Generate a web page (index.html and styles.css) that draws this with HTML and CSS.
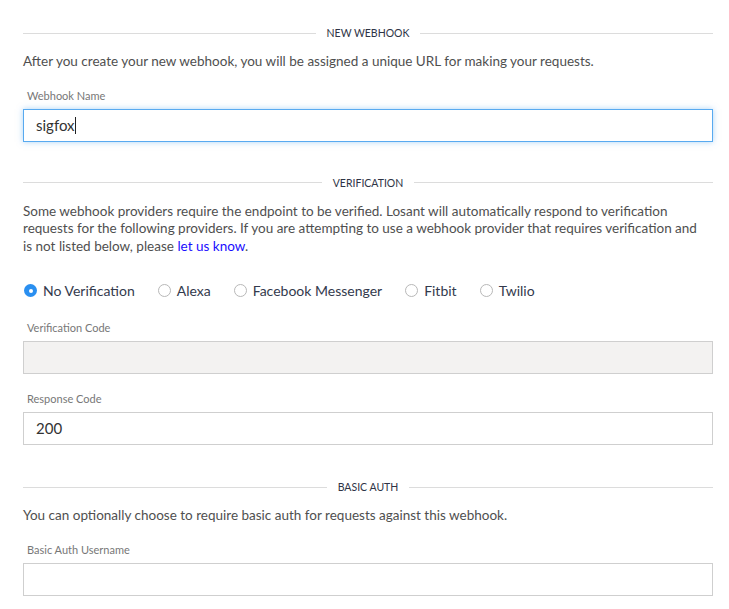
FILE: index.html
```html
<!DOCTYPE html>
<html>
<head>
<meta charset="utf-8">
<link rel="stylesheet" href="styles.css">
</head>
<body>
<div class="page">
  <div class="divider"><span>NEW WEBHOOK</span></div>
  <p class="desc">After you create your new webhook, you will be assigned a unique URL for making your requests.</p>
  <div class="field">
    <label class="label">Webhook Name</label>
    <div class="input focused">sigfox<span class="caret"></span></div>
  </div>

  <div class="divider sec"><span>VERIFICATION</span></div>
  <p class="desc">Some webhook providers require the endpoint to be verified. Losant will automatically respond to verification requests for the following providers. If you are attempting to use a webhook provider that requires verification and is not listed below, please <a href="#">let us know</a>.</p>
  <div class="radios">
    <label class="radio"><span class="dot checked"></span>No Verification</label>
    <label class="radio"><span class="dot"></span>Alexa</label>
    <label class="radio"><span class="dot"></span>Facebook Messenger</label>
    <label class="radio"><span class="dot"></span>Fitbit</label>
    <label class="radio"><span class="dot"></span>Twilio</label>
  </div>
  <div class="field">
    <label class="label">Verification Code</label>
    <div class="input disabled"></div>
  </div>
  <div class="field">
    <label class="label">Response Code</label>
    <div class="input">200</div>
  </div>

  <div class="divider sec2"><span>BASIC AUTH</span></div>
  <p class="desc">You can optionally choose to require basic auth for requests against this webhook.</p>
  <div class="field">
    <label class="label">Basic Auth Username</label>
    <div class="input"></div>
  </div>
</div>
</body>
</html>
```

FILE: styles.css
```css
html, body {
  margin: 0;
  padding: 0;
  background: #ffffff;
}
body {
  font-family: "Lato", "Fira Sans", "Open Sans", sans-serif;
  color: #4a4a4a;
}
.page {
  padding: 26px 16px 0 23px;
}
.divider {
  display: flex;
  align-items: center;
  gap: 11px;
  font-size: 10.5px;
  color: #2e3446;
  height: 14px;
  line-height: 14px;
}
.divider::before, .divider::after {
  content: "";
  flex: 1;
  border-top: 1px solid #dcdcdc;
}
.divider.sec { margin-top: 34px; }
.divider.sec2 { margin-top: 35px; }
.desc {
  margin: 13px 0 0 0;
  max-width: 680px;
  font-size: 13.5px;
  line-height: 17.5px;
  color: #4f4f4f;
}
.desc a {
  color: #1a0dff;
  text-decoration: none;
}
.field {
  margin-top: 18px;
}
.label {
  display: block;
  font-size: 11px;
  line-height: 13px;
  color: #777777;
  padding-left: 4px;
  margin-bottom: 7px;
}
.input {
  box-sizing: border-box;
  height: 33px;
  border: 1px solid #cfcfcf;
  background: #fff;
  padding: 0 12px;
  font-size: 15px;
  line-height: 31px;
  color: #333;
}
.input.focused {
  border-color: #58aaf0;
  box-shadow: 0 0 6px rgba(88, 170, 240, 0.5);
}
.input.disabled {
  background: #f3f2f1;
}
.caret {
  display: inline-block;
  width: 1px;
  height: 17px;
  background: #222;
  vertical-align: -3px;
}
.radios {
  display: flex;
  gap: 22px;
  margin-top: 27px;
  font-size: 14px;
  color: #333a4d;
}
.radio {
  display: flex;
  align-items: center;
  gap: 6px;
  padding-left: 1px;
}
.dot {
  box-sizing: border-box;
  width: 13px;
  height: 13px;
  border-radius: 50%;
  border: 1px solid #b8b8b8;
  background: #fff;
  position: relative;
}
.dot.checked {
  border: none;
  background: #2a8ff0;
}
.dot.checked::after {
  content: "";
  position: absolute;
  left: 4.5px;
  top: 4.5px;
  width: 4px;
  height: 4px;
  border-radius: 50%;
  background: #fff;
}
.radios + .field { margin-top: 22px; }
```
